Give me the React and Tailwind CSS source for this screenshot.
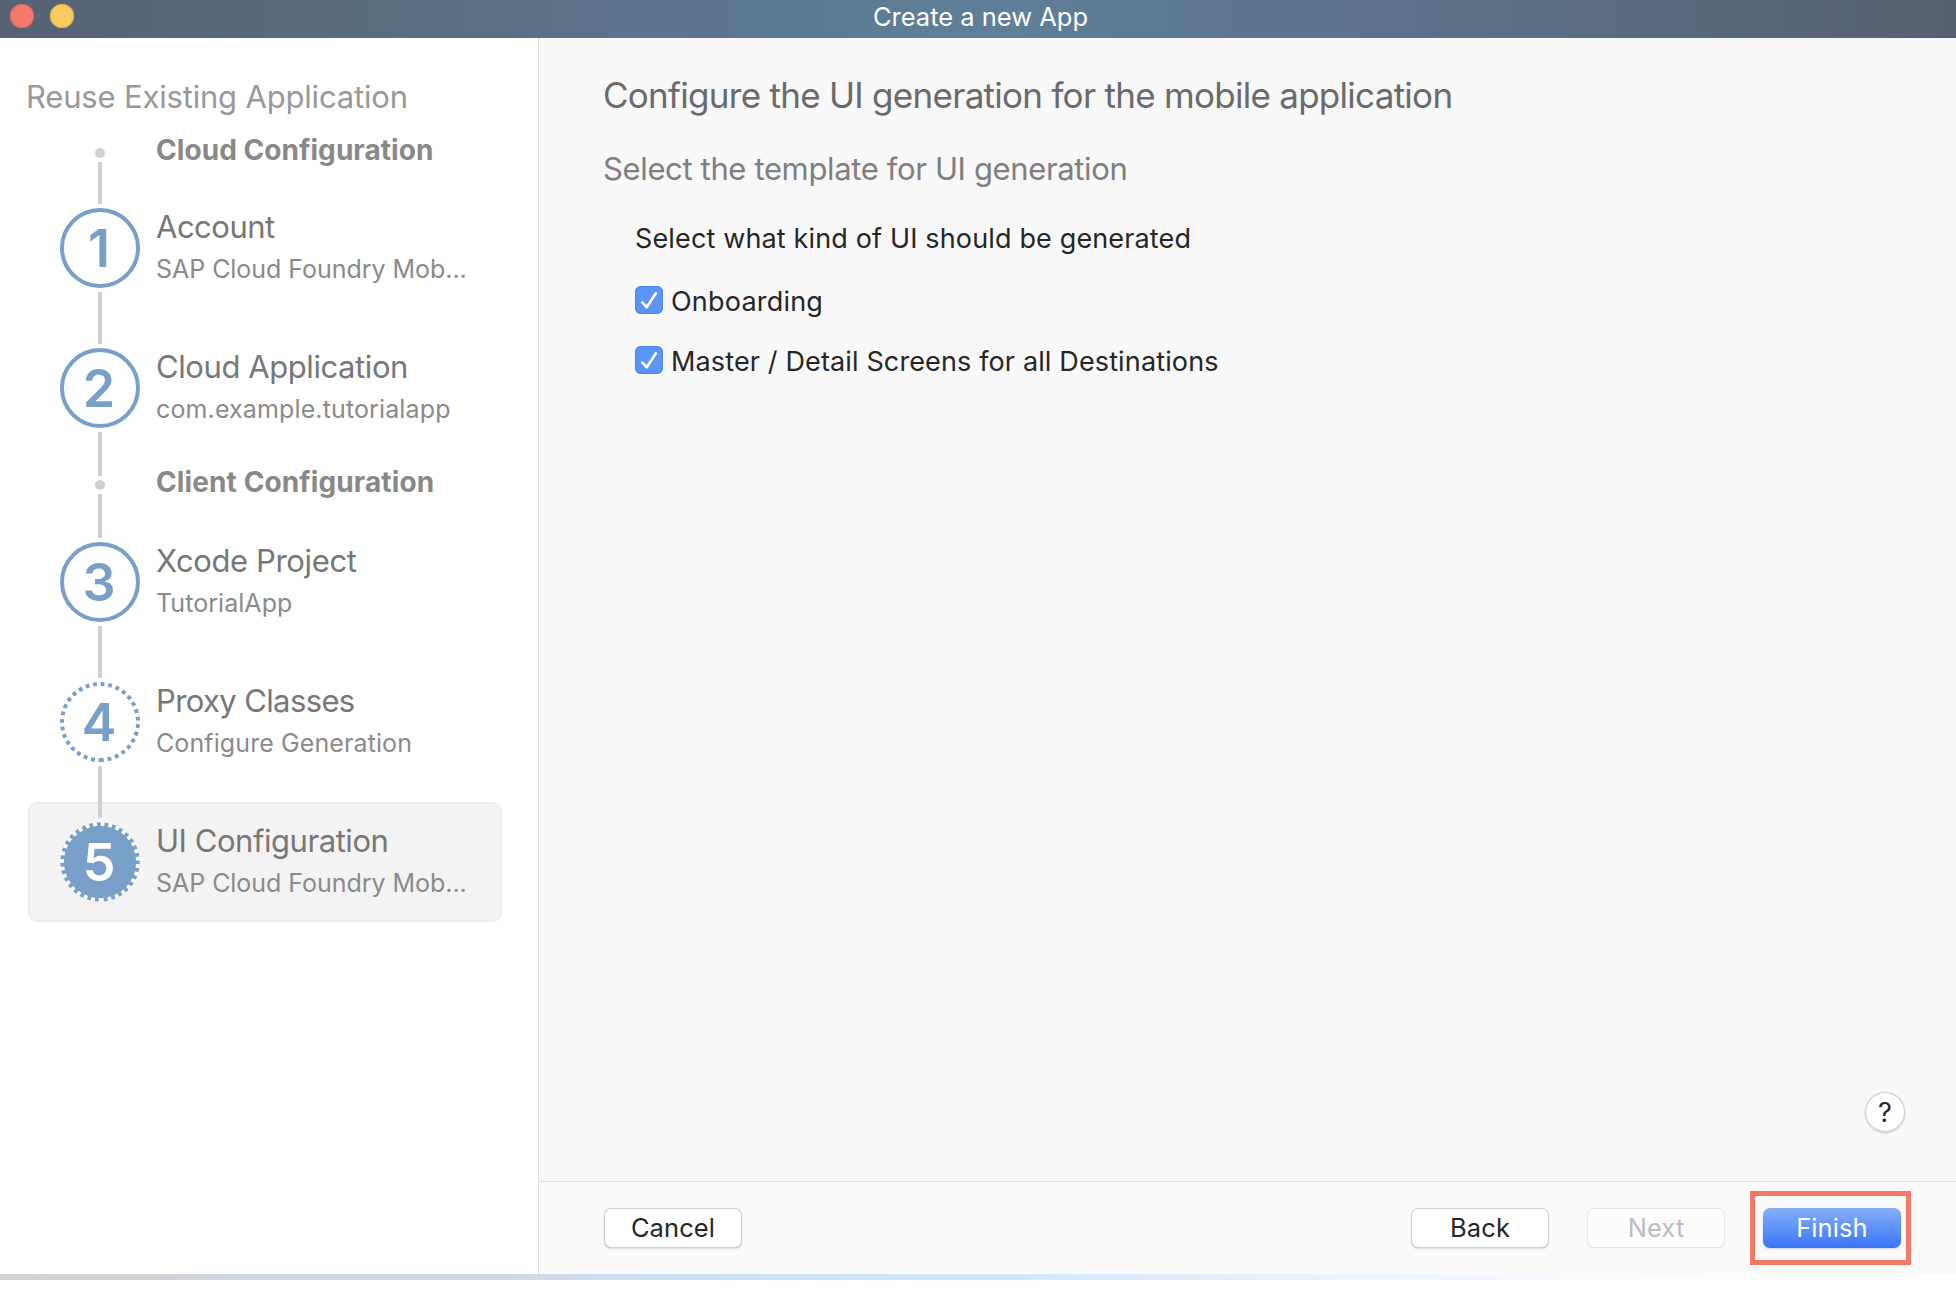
const RING = "M40 78 A38 38 0 1 0 40 2 A38 38 0 1 0 40 78";

function Marker({ number, variant }) {
  const filled = variant === "current";
  return (
    <div className="grid h-20 w-20 shrink-0 grid-cols-[80px] grid-rows-[80px] place-items-center">
      <svg viewBox="0 0 80 80" className="col-start-1 row-start-1 h-20 w-20">
        {filled && <circle cx="40" cy="40" r="39.8" fill="#779fc8" />}
        <path
          d={RING}
          fill="none"
          stroke={filled ? "#ffffff" : "#779fc8"}
          strokeWidth="4"
          strokeDasharray={variant === "done" ? undefined : "3.822 3.822"}
        />
      </svg>
      <span
        className={`col-start-1 row-start-1 mt-0.5 -ml-0.5 text-[52px] leading-[80px] font-semibold ${filled ? "text-white" : "text-[#779fc8]"}`}
      >
        {number}
      </span>
    </div>
  );
}

const Line = ({ className }) => <div className={`w-1 shrink-0 bg-[#d0d0d0] ${className}`} />;

function GroupRow({ title, className, tracking, line }) {
  return (
    <div className={`flex gap-4 ${className}`}>
      <div className="flex w-20 flex-col items-center gap-1">
        <div className="h-2.5 w-2.5 rounded-full bg-[#d0d0d0]" />
        <Line className={line} />
      </div>
      <div className={`-mt-3.5 text-[28px] leading-8 font-bold whitespace-nowrap text-[#888888] ${tracking}`}>{title}</div>
    </div>
  );
}

function StepText({ title, detail, tracking, detailTracking }) {
  return (
    <div className="whitespace-nowrap">
      <div className={`text-[31px] leading-[38px] text-[#777777] ${tracking}`}>{title}</div>
      <div className={`mt-2 text-[25px] leading-[30px] text-[#8a8a8a] ${detailTracking}`}>{detail}</div>
    </div>
  );
}

function StepRow({ number, variant, className, line, ...text }) {
  return (
    <div className={`flex gap-4 ${className}`}>
      <div className="flex w-20 flex-col items-center gap-1">
        <Marker number={number} variant={variant} />
        <Line className={line} />
      </div>
      <StepText {...text} />
    </div>
  );
}

function Checkbox({ label, tracking }) {
  return (
    <label className="flex h-7 items-start">
      <svg viewBox="0 0 28 28" className="h-7 w-7 rounded-md bg-[#5b93f7] shadow-[inset_0_0_0_1px_#4f88ee]">
        <path d="M7.6 17.9 L12 22.3 L20.8 8.6" fill="none" stroke="#3f74d6" strokeWidth="2.6" strokeLinecap="round" strokeLinejoin="round" opacity="0.45" />
        <path d="M7.4 16.6 L11.8 21.2 L20.8 7.4" fill="none" stroke="#ffffff" strokeWidth="2.8" strokeLinecap="round" strokeLinejoin="round" />
      </svg>
      <span className={`ml-2 text-[27px] leading-[32px] whitespace-nowrap text-[#262626] ${tracking}`}>{label}</span>
    </label>
  );
}

function Button({ children, className }) {
  return (
    <button className={`h-10 w-[138px] rounded-[7px] text-center text-[25.5px] leading-[38px] tracking-[0.1px] ${className}`}>
      {children}
    </button>
  );
}

const PLAIN =
  "bg-white text-[#262626] shadow-[inset_0_0_0_1px_#cfcfcf,inset_0_-1px_0_#b4b4b4,0_1px_2px_rgba(0,0,0,0.12)]";
const DISABLED = "bg-[#fcfcfc] text-[#bdbdbd] shadow-[inset_0_0_0_1px_#e6e6e6,inset_0_-1px_0_#dadada]";
const PRIMARY = "bg-linear-to-b from-[#86aef7] to-[#3874f7] text-white shadow-[0_1px_2px_rgba(0,0,0,0.15)]";

export default function App() {
  return (
    <div className="flex h-[1296px] w-[1956px] flex-col overflow-hidden bg-white font-['Inter',sans-serif]">
      <header className="grid h-[38px] shrink-0 grid-cols-[1fr_auto_1fr] bg-[linear-gradient(90deg,#556373_0%,#5a6c80_20%,#5c758e_35%,#5f7f98_50%,#5d758e_65%,#5a6b82_82%,#546170_100%)]">
        <div className="flex gap-4 pt-1 pl-2.5">
          <div className="h-6 w-6 rounded-full bg-[#f4796d] shadow-[inset_0_0_0_1px_#e2645a]" />
          <div className="h-6 w-6 rounded-full bg-[#f9ca5e] shadow-[inset_0_0_0_1px_#e3b04a]" />
        </div>
        <div className="pl-[5px] text-[25.5px] leading-[34px] text-white">Create a new App</div>
      </header>

      <div className="flex h-[1236px] shrink-0">
        <aside className="w-[539px] shrink-0 border-r border-[#dedede] bg-white pt-[39px]">
          <h2 className="pl-[26px] text-[31px] leading-10 tracking-[-0.18px] text-[#999999]">Reuse Existing Application</h2>
          <div className="mt-[31px]">
            <GroupRow title="Cloud Configuration" className="h-[60px] pl-15" tracking="tracking-[0.06px]" line="h-[42px]" />
            <StepRow
              number="1" variant="done" className="h-[140px] pl-15" line="h-[52px]"
              title="Account" tracking="tracking-[-0.5px]"
              detail="SAP Cloud Foundry Mob..." detailTracking="tracking-[-0.04px]"
            />
            <StepRow
              number="2" variant="done" className="h-[132px] pl-15" line="h-[44px]"
              title="Cloud Application" tracking="tracking-[-0.42px]"
              detail="com.example.tutorialapp" detailTracking="tracking-[0.13px]"
            />
            <GroupRow title="Client Configuration" className="h-[62px] pl-15" tracking="tracking-[0.11px]" line="h-[44px]" />
            <StepRow
              number="3" variant="done" className="h-[140px] pl-15" line="h-[52px]"
              title="Xcode Project" tracking="tracking-[-0.37px]"
              detail="TutorialApp" detailTracking="tracking-[0.05px]"
            />
            <StepRow
              number="4" variant="open" className="h-[120px] pl-15" line="h-9"
              title="Proxy Classes" tracking="tracking-[-0.62px]"
              detail="Configure Generation" detailTracking="tracking-[0.1px]"
            />
            <div className="ml-7 flex h-[120px] w-[474px] gap-4 rounded-[10px] border-2 border-[#ececec] bg-[#f3f3f3] pl-[30px]">
              <div className="-mt-0.5 flex w-20 flex-col items-center gap-1">
                <Line className="h-4" />
                <Marker number="5" variant="current" />
              </div>
              <div className="mt-[18px]">
                <StepText
                  title="UI Configuration" tracking="tracking-[-0.45px]"
                  detail="SAP Cloud Foundry Mob..." detailTracking="tracking-[-0.04px]"
                />
              </div>
            </div>
          </div>
        </aside>

        <main className="flex grow flex-col bg-[#f8f8f8]">
          <div className="grow pt-[35px] pl-16">
            <h1 className="text-[35px] leading-[44px] tracking-[-0.72px] text-[#6a6a6a]">
              Configure the UI generation for the mobile application
            </h1>
            <h2 className="mt-8 text-[31px] leading-10 tracking-[-0.36px] text-[#7f7f7f]">Select the template for UI generation</h2>
            <div className="mt-8 pl-8">
              <p className="text-[27px] leading-9 tracking-[0.145px] text-[#262626]">Select what kind of UI should be generated</p>
              <div className="mt-[29px] flex flex-col gap-8">
                <Checkbox label="Onboarding" tracking="tracking-[0.2px]" />
                <Checkbox label="Master / Detail Screens for all Destinations" tracking="tracking-[0.135px]" />
              </div>
            </div>
          </div>
          <div className="mb-[49px] flex justify-end pr-[51px]">
            <button className="h-10 w-10 rounded-full bg-white text-center text-[27px] leading-[42px] text-[#262626] shadow-[inset_0_0_0_1px_#cccccc,0_1px_2px_rgba(0,0,0,0.2)]">
              ?
            </button>
          </div>
          <footer className="flex h-[93px] shrink-0 border-t border-[#dedede] bg-[#fafafa] pl-[65px]">
            <Button className={`mt-[26px] ${PLAIN}`}>Cancel</Button>
            <Button className={`mt-[26px] ml-auto ${PLAIN}`}>Back</Button>
            <Button className={`mt-[26px] ml-[38px] ${DISABLED}`}>Next</Button>
            <div className="mt-[9px] mr-[45px] ml-[25px] h-[74px] w-[161px] border-5 border-[#f47865] pt-3 pl-2">
              <Button className={PRIMARY}>Finish</Button>
            </div>
          </footer>
        </main>
      </div>
      <div className="h-1.5 shrink-0 bg-[linear-gradient(90deg,#d2d2d2_0%,#cddae6_25%,#cddfee_35%,#d3e6f7_52%,#e9f2fc_66%,#fafcff_82%,#ffffff_92%)]" />
    </div>
  );
}
